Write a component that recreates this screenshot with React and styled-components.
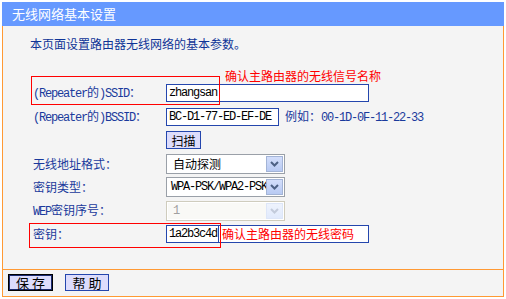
import React from 'react';
import styled, { createGlobalStyle } from 'styled-components';

const GlobalStyle = createGlobalStyle`
  body {
    margin: 0;
    background: #ffffff;
    font-family: "Noto Sans CJK SC", "Liberation Sans", sans-serif;
    font-size: 12px;
  }
`;

const StyledPage = styled.section`
  margin: 2px;
  width: 502px;
`;

const StyledHeader = styled.div`
  height: 24px;
  line-height: 24px;
  padding-left: 10px;
  background: #6699ff;
  color: #ffffff;
  font-size: 13px;
`;

const StyledPanel = styled.section`
  border: 1px solid #ff9933;
  border-top: none;
  background: #f4f4f4;
`;

const StyledBody = styled.div`
  position: relative;
  padding: 11px 0 23px 27px;
`;

const StyledIntro = styled.div`
  line-height: 14px;
  color: #0f3497;
`;

const StyledForm = styled.div`
  display: grid;
  grid-template-columns: 133px 1fr;
  grid-template-rows: 24px 23px 24px 23px 24px 23px 24px;
  align-items: center;
  margin: 30px 0 0 3px;
`;

const StyledLabel = styled.div`
  color: #1a3a9c;
  line-height: 14px;
`;

const Mono = styled.span`
  font-family: "Liberation Mono", "DejaVu Sans Mono", monospace;
  letter-spacing: -1.2px;
`;

const StyledCell = styled.div`
  display: flex;
  align-items: center;
  gap: 6px;
`;

const StyledInput = styled.div`
  box-sizing: border-box;
  width: ${(props) => props.width}px;
  height: ${(props) => props.height || 18}px;
  border: 1px solid #2446ad;
  background: #ffffff;
  color: #000000;
  display: flex;
  align-items: center;
  padding-left: 2px;
  overflow: hidden;
  white-space: nowrap;
`;

const StyledValue = styled.span`
  padding-right: 1px;
  border-right: ${(props) => (props.divided ? '1px solid #2446ad' : 'none')};
  height: 100%;
  display: flex;
  align-items: center;
`;

const StyledHint = styled.span`
  color: ${(props) => (props.red ? '#ff0000' : '#1a3a9c')};
  padding-left: ${(props) => props.inset || 0}px;
  line-height: 14px;
`;

const StyledButton = styled.div`
  box-sizing: border-box;
  display: flex;
  align-items: center;
  justify-content: center;
  width: ${(props) => props.width}px;
  height: ${(props) => props.height}px;
  background: #dcdcfc;
  border: 1px solid ${(props) => (props.focused ? '#000000' : '#2446ad')};
  box-shadow: ${(props) => (props.focused ? 'inset 0 0 0 1px #1a2a70' : 'none')};
  color: #000000;
  font-size: ${(props) => props.size || 12}px;
`;

const StyledSelect = styled.div`
  box-sizing: border-box;
  width: 119px;
  height: 20px;
  border: 1px solid ${(props) => (props.disabled ? '#cfccbd' : '#9aa0a8')};
  background: #ffffff;
  display: flex;
  align-items: center;
  padding: 1px;
`;

const StyledSelectText = styled.div`
  flex: 1;
  overflow: hidden;
  white-space: nowrap;
  padding-left: ${(props) => props.inset}px;
  color: ${(props) => (props.disabled ? '#a0a0a0' : '#000000')};
  background: ${(props) => (props.disabled ? '#f9f9f6' : '#ffffff')};
  height: 100%;
  display: flex;
  align-items: center;
`;

const StyledArrow = styled.div`
  box-sizing: border-box;
  width: 17px;
  height: 100%;
  display: flex;
  align-items: center;
  justify-content: center;
  border: 1px solid ${(props) => (props.disabled ? '#dde6f8' : '#a3b4d6')};
  background: ${(props) =>
    props.disabled
      ? 'linear-gradient(#eef3fd, #e1eafc)'
      : 'linear-gradient(#d3defb, #b8caf3)'};
`;

const StyledMark = styled.div`
  position: absolute;
  left: ${(props) => props.x}px;
  top: ${(props) => props.y}px;
  width: ${(props) => props.w}px;
  height: ${(props) => props.h}px;
  box-sizing: border-box;
  border: 1px solid #ff0000;
  pointer-events: none;
`;

const StyledNote = styled.div`
  position: absolute;
  left: 222px;
  top: 43px;
  color: #ff0000;
  line-height: 14px;
`;

const StyledFooter = styled.div`
  border-top: 1px solid #ff9933;
  padding: 4px 5px 5px;
  display: flex;
  gap: 12px;
`;

const Chevron = ({ disabled }) => (
  <svg width="9" height="6" viewBox="0 0 9 6">
    <path
      d="M1 1 L4.5 4.5 L8 1"
      fill="none"
      stroke={disabled ? '#c3cbdb' : '#4d6185'}
      strokeWidth="2"
    />
  </svg>
);

const Select = ({ children, disabled, inset }) => (
  <StyledSelect disabled={disabled}>
    <StyledSelectText disabled={disabled} inset={inset}>
      {children}
    </StyledSelectText>
    <StyledArrow disabled={disabled}>
      <Chevron disabled={disabled} />
    </StyledArrow>
  </StyledSelect>
);

export default function App() {
  return (
    <StyledPage>
      <GlobalStyle />
      <StyledHeader>无线网络基本设置</StyledHeader>
      <StyledPanel>
        <StyledBody>
          <StyledIntro>本页面设置路由器无线网络的基本参数。</StyledIntro>
          <StyledForm>
            <StyledLabel>
              <Mono>(Repeater</Mono>的<Mono>)SSID</Mono>：
            </StyledLabel>
            <StyledCell>
              <StyledInput width={203}>
                <Mono>zhangsan</Mono>
              </StyledInput>
            </StyledCell>

            <StyledLabel>
              <Mono>(Repeater</Mono>的<Mono>)BSSID</Mono>：
            </StyledLabel>
            <StyledCell>
              <StyledInput width={113}>
                <Mono>BC-D1-77-ED-EF-DE</Mono>
              </StyledInput>
              <StyledHint>
                例如：<Mono>00-1D-0F-11-22-33</Mono>
              </StyledHint>
            </StyledCell>

            <div />
            <StyledCell>
              <StyledButton width={35} height={18}>
                扫描
              </StyledButton>
            </StyledCell>

            <StyledLabel>无线地址格式：</StyledLabel>
            <StyledCell>
              <Select inset={5}>自动探测</Select>
            </StyledCell>

            <StyledLabel>密钥类型：</StyledLabel>
            <StyledCell>
              <Select inset={3}>
                <Mono>WPA-PSK/WPA2-PSK</Mono>
              </Select>
            </StyledCell>

            <StyledLabel>
              <Mono>WEP</Mono>密钥序号：
            </StyledLabel>
            <StyledCell>
              <Select disabled inset={5}>
                <Mono>1</Mono>
              </Select>
            </StyledCell>

            <StyledLabel>密钥：</StyledLabel>
            <StyledCell>
              <StyledInput width={203}>
                <StyledValue divided>
                  <Mono>1a2b3c4d</Mono>
                </StyledValue>
                <StyledHint red inset={3}>
                  确认主路由器的无线密码
                </StyledHint>
              </StyledInput>
            </StyledCell>
          </StyledForm>

          <StyledNote>确认主路由器的无线信号名称</StyledNote>
          <StyledMark x={28} y={50} w={189} h={29} />
          <StyledMark x={26} y={197} w={192} h={25} />
        </StyledBody>
        <StyledFooter>
          <StyledButton focused width={45} height={17} size={13}>
            保 存
          </StyledButton>
          <StyledButton width={44} height={17} size={13}>
            帮 助
          </StyledButton>
        </StyledFooter>
      </StyledPanel>
    </StyledPage>
  );
}
